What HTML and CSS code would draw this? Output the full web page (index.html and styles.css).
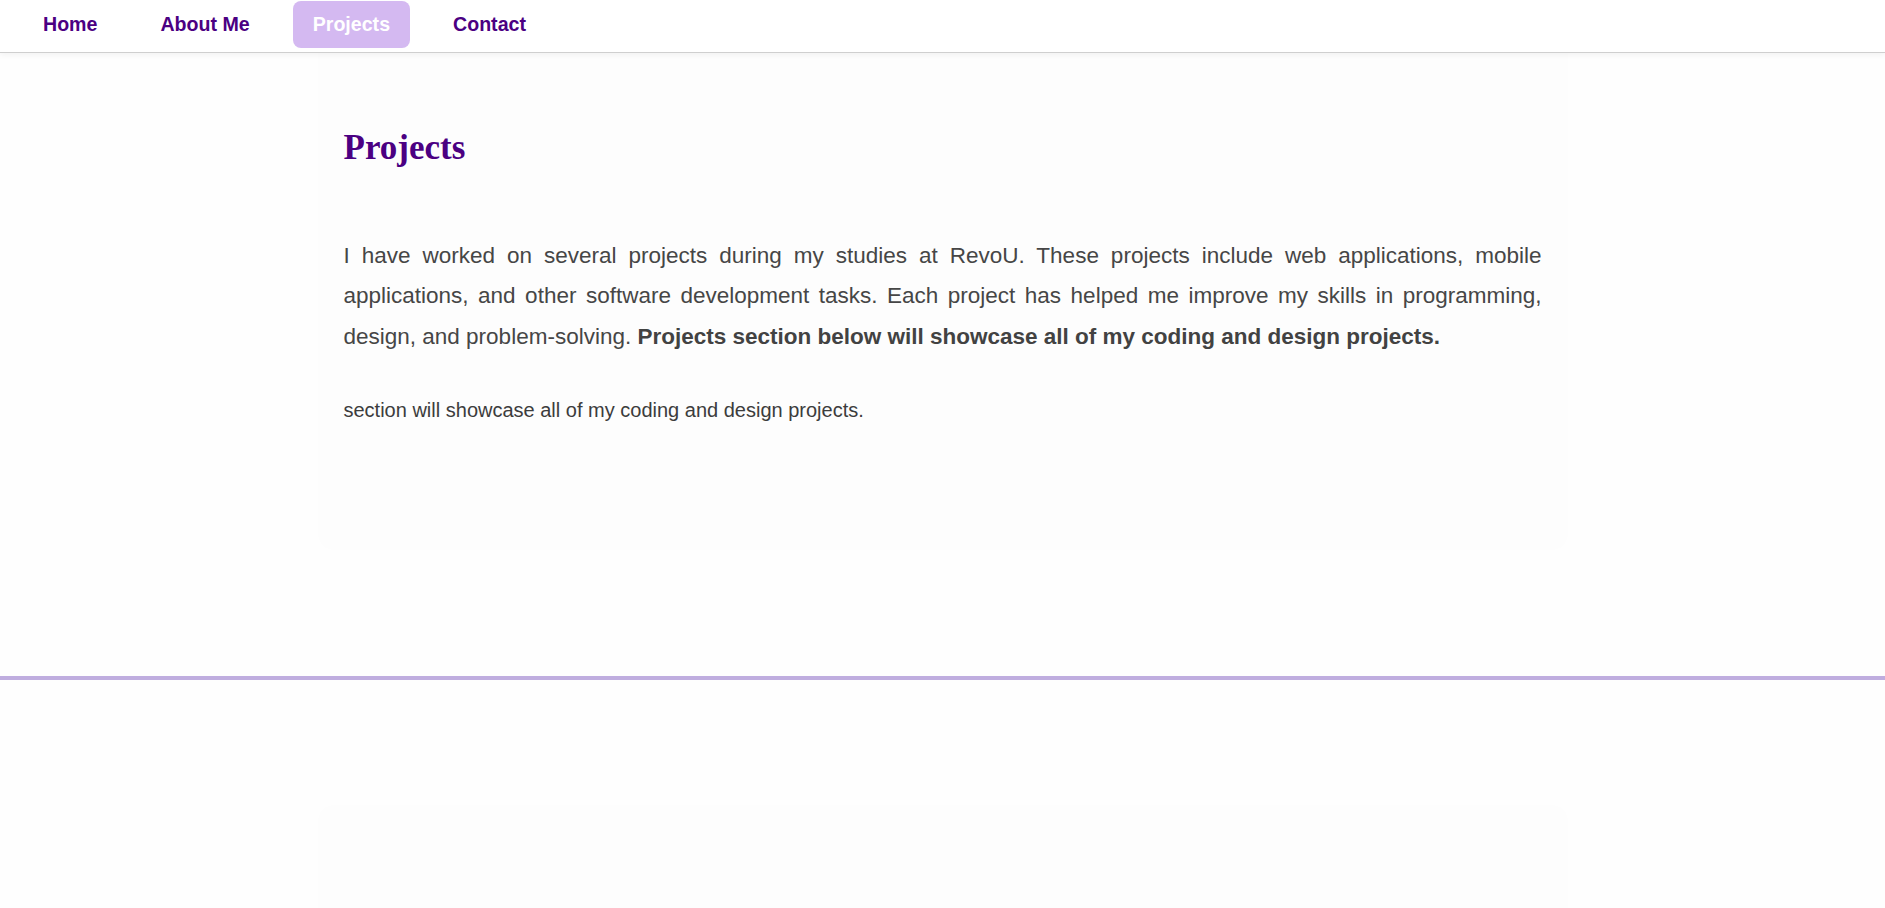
FILE: index.html
```html
<!DOCTYPE html>
<html lang="en">
<head>
<meta charset="utf-8">
<title>Projects</title>
<link rel="stylesheet" href="styles.css">
</head>
<body>
<nav class="topnav">
  <ul class="nav-list">
    <li><a class="nav-link" href="#">Home</a></li>
    <li><a class="nav-link" href="#">About Me</a></li>
    <li><a class="nav-link active" href="#">Projects</a></li>
    <li><a class="nav-link" href="#">Contact</a></li>
  </ul>
</nav>
<main>
  <section class="card intro">
    <h1 class="title">Projects</h1>
    <p class="lead">I have worked on several projects during my studies at RevoU. These projects include web applications, mobile applications, and other software development tasks. Each project has helped me improve my skills in programming, design, and problem-solving. <strong>Projects section below will showcase all of my coding and design projects.</strong></p>
    <p class="note">section will showcase all of my coding and design projects.</p>
  </section>
  <hr class="divider">
  <section class="card next"></section>
</main>
</body>
</html>
```

FILE: styles.css
```css
html, body {
  margin: 0;
  padding: 0;
}
body {
  background: #fefefe;
  font-family: "Liberation Sans", Arial, sans-serif;
  overflow: hidden;
}
.topnav {
  background: #ffffff;
  border-bottom: 1px solid #cfcfcf;
  box-shadow: 0 2px 6px rgba(0, 0, 0, 0.05);
  padding: 1px 0 4px 23px;
  position: relative;
  z-index: 1;
}
.nav-list {
  list-style: none;
  margin: 0;
  padding: 0;
  display: flex;
  gap: 23px;
}
.nav-link {
  display: block;
  padding: 12px 20px;
  line-height: 23px;
  font-size: 19.6px;
  font-weight: bold;
  color: #4b0082;
  text-decoration: none;
  border-radius: 8px;
}
.nav-link.active {
  background: #d4b9f1;
  color: #ffffff;
}
.card {
  max-width: 1250px;
  margin: 0 auto;
  background: #fdfdfd;
  border-radius: 16px;
  box-sizing: border-box;
}
.intro {
  padding: 75px 26px 128px;
  border-top-left-radius: 0;
  border-top-right-radius: 0;
}
.title {
  margin: 0;
  font-family: "Liberation Serif", "Times New Roman", serif;
  font-size: 35px;
  line-height: 40px;
  font-weight: bold;
  color: #4b0082;
}
.lead {
  margin: 68px 0 0;
  font-size: 22.5px;
  line-height: 40.3px;
  text-align: justify;
  color: #464646;
}
.lead strong {
  color: #424242;
}
.note {
  margin: 42px 0 0;
  font-size: 20px;
  line-height: 23px;
  color: #3c3c3c;
}
.divider {
  border: none;
  height: 4px;
  background: #bfaddf;
  margin: 126px 0 125px;
}
.next {
  height: 300px;
}
```
